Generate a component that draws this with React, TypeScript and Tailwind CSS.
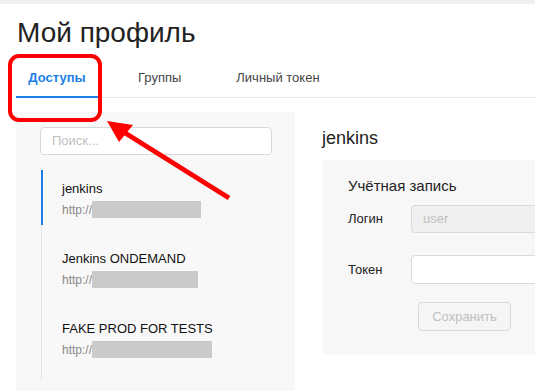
import React from 'react';

const font = { fontFamily: '"Liberation Sans", Arial, sans-serif' };

const accounts = [
  { name: 'jenkins', host: 'http://', mask: 109, active: true },
  { name: 'Jenkins ONDEMAND', host: 'http://', mask: 106, active: false },
  { name: 'FAKE PROD FOR TESTS', host: 'http://', mask: 120, active: false },
];

const App: React.FC = () => {
  return (
    <div className="relative w-[535px] h-[391px] overflow-hidden bg-white text-[#222]" style={font}>
      <div className="h-[4px] bg-[#f0f0f0]"></div>

      <h1 className="pl-[17px] pt-[11px] text-[28px] leading-[36px] font-normal text-[#222]">Мой профиль</h1>

      {/* tabs */}
      <div className="ml-[16px] mt-[7px] flex items-end border-b border-[#e8e8e8] h-[40px] text-[13px]">
        <div className="w-[82px] h-full flex items-center justify-center font-bold text-[#1a7fe8] border-b-2 border-[#1a7fe8] -mb-[1px]">
          Доступы
        </div>
        <div className="h-full flex items-center pl-[40px] text-[#444]">Группы</div>
        <div className="h-full flex items-center pl-[55px] text-[#444]">Личный токен</div>
      </div>

      <div className="flex mt-[14px]">
        {/* left list */}
        <div className="shrink-0 ml-[16px] w-[279px] h-[300px] bg-[#f8f8f8] pl-[24px] pt-[15px]">
          <div className="w-[232px] h-[28px] rounded-[4px] border border-[#d9d9d9] bg-white flex items-center pl-[11px] text-[13px] text-[#bfbfbf]">
            Поиск...
          </div>
          <div className="mt-[15px] ml-[1px] flex flex-col border-l border-[#e4e4e4]">
            {accounts.map((a, idx) => (
              <div
                key={idx}
                className={`h-[55px] mb-[15px] pl-[19px] pt-[10px] -ml-[1px] border-l-2 ${a.active ? 'border-[#1a7fe8]' : 'border-transparent'}`}
              >
                <div className="text-[13px] leading-[18px] text-[#111]">{a.name}</div>
                <div className="mt-[3px] flex items-center h-[17px] text-[12px] text-[#888]">
                  <span>{a.host}</span>
                  <span className="h-[17px] bg-[#cacaca]" style={{ width: a.mask }}></span>
                </div>
              </div>
            ))}
          </div>
        </div>

        {/* right detail */}
        <div className="shrink-0 pl-[27px] pt-[13px]">
          <div className="text-[18px] leading-[26px] text-[#222]">jenkins</div>
          <div className="mt-[9px] w-[260px] h-[195px] rounded-[4px] bg-[#f7f7f7] pl-[26px] pt-[15px]">
            <div className="text-[15px] leading-[22px] text-[#222]">Учётная запись</div>
            <div className="mt-[8px] flex items-center h-[28px]">
              <span className="shrink-0 w-[63px] text-[13px]">Логин</span>
              <div className="shrink-0 w-[200px] h-[28px] rounded-[4px] border border-[#d9d9d9] bg-[#f0f0f0] flex items-center pl-[11px] text-[13px] text-[#bfbfbf]">
                user
              </div>
            </div>
            <div className="mt-[22px] flex items-center h-[29px]">
              <span className="shrink-0 w-[63px] text-[13px]">Токен</span>
              <div className="shrink-0 w-[200px] h-[29px] rounded-[4px] border border-[#d9d9d9] bg-white"></div>
            </div>
            <div className="mt-[18px] ml-[70px] w-[93px] h-[29px] rounded-[4px] border border-[#d9d9d9] bg-[#f5f5f5] flex items-center justify-center text-[13px] text-[#bfbfbf]">
              Сохранить
            </div>
          </div>
        </div>
      </div>

      {/* annotation overlay */}
      <svg className="absolute left-0 top-0 pointer-events-none" width="535" height="391">
        <rect x="10" y="56" width="90" height="64" rx="9" fill="none" stroke="#ff0000" strokeWidth="4" />
        <line x1="229" y1="198" x2="122" y2="131" stroke="#ff0000" strokeWidth="5" />
        <polygon points="107,121 133,125 119,142" fill="#ff0000" />
      </svg>
    </div>
  );
};

export default App;
